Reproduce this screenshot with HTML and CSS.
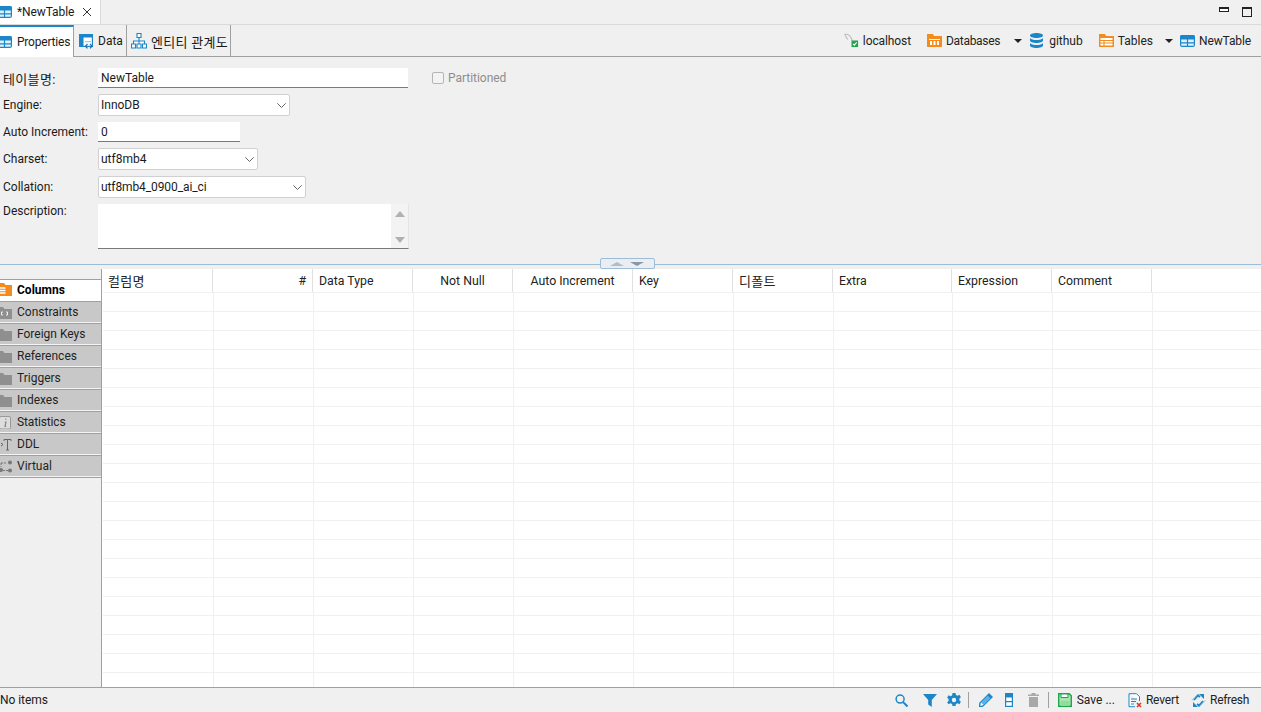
FILE: index.html
```html
<!DOCTYPE html>
<html lang="ko">
<head>
<meta charset="utf-8">
<title>NewTable</title>
<link rel="stylesheet" href="styles.css">
</head>
<body>
<svg class="defs" width="0" height="0" aria-hidden="true">
  <defs>
    <symbol id="tbl" viewBox="0 0 15 12" overflow="visible">
      <rect x=".6" y=".6" width="13.800" height="10.800" rx="1.500" fill="#dff0fa" stroke="#1b87c9" stroke-width="1.200"/>
      <path d="M0 2a2 2 0 0 1 2-2h11a2 2 0 0 1 2 2v2.500H0z" fill="#1b87c9"/>
      <path d="M0 7.800h15M7.500 4v8" stroke="#1b87c9" stroke-width="1.200" fill="none"/>
    </symbol>
    <symbol id="folder" viewBox="0 0 15 13">
      <path d="M0 1h6l1.500 2H15v10H0z" fill="#8f8f8f"/>
    </symbol>
  </defs>
</svg>
<div class="app">
  <header class="editor-tabs">
    <div class="editor-tab">
      <svg class="ico-tab" viewBox="3 0 12 12"><use href="#tbl" width="15" height="12"/></svg>
      <span class="editor-title">*NewTable</span>
      <svg class="close" viewBox="0 0 10 10"><path d="M1 1l8 8M9 1l-8 8" stroke="#333" stroke-width="1" fill="none"/></svg>
    </div>
    <div class="win-btns">
      <span class="win-min"></span>
      <span class="win-max"></span>
    </div>
  </header>

  <nav class="sub-bar">
    <div class="sub-tab active">
      <svg class="ico-tab" viewBox="3 0 12 12"><use href="#tbl" width="15" height="12"/></svg>
      <span class="props">Properties</span>
    </div>
    <div class="sub-tab data">
      <svg class="ico" viewBox="0 0 15 15">
        <rect x=".6" y=".6" width="12.800" height="11.800" fill="#fff" stroke="#1b87c9" stroke-width="1.200"/>
        <path d="M0 0h14v3.500H0zM0 3.500h4.500V13H0z" fill="#1b87c9"/>
        <path d="M6 7h6v1.200H6z" fill="#9ccbe8"/>
        <path d="M8.500 10l-2 2.200 2 2.200M11 10l2 2.200-2 2.200" fill="none" stroke="#1b6fa8" stroke-width="1.200"/>
      </svg>
      <span>Data</span>
    </div>
    <div class="sub-tab er">
      <svg class="ico-er" viewBox="0 0 16 16">
        <path d="M6 .5h4v4H6zM.5 11h4v4h-4zM6 11h4v4H6zM11.500 11h4v4h-4zM8 4.500V11M2.500 11V8h11v3" fill="#fff" stroke="#1b87c9" stroke-width="1.100"/>
      </svg>
      <span class="ko">엔티티 관계도</span>
    </div>
    <div class="crumbs">
      <span class="crumb c-host">
        <svg class="ico" viewBox="0 0 16 16">
          <path d="M1 1c4 0 7 3 8 8M1 1c0 3 2 4 3 6" fill="none" stroke="#b5bcc0" stroke-width="1.100"/>
          <rect x="8" y="8" width="7" height="7" fill="#1fa54a"/>
          <path d="M9.500 11.500l1.500 1.500 2.500-3" fill="none" stroke="#fff" stroke-width="1.100"/>
        </svg>
        <span class="lbl-host">localhost</span>
      </span>
      <span class="crumb c-db">
        <svg class="ico" viewBox="0 0 15 13">
          <path d="M0 0h6l1 2h8v11H0z" fill="#f28c1e"/>
          <path d="M2 5h11v1H2zM3 7h2v4H3zM6.500 7h2v4h-2zM10 7h2v4h-2z" fill="#fff"/>
        </svg>
        <span class="lbl-db">Databases</span>
      </span>
      <span class="drop c-drop1"></span>
      <span class="crumb c-gh">
        <svg class="ico narrow" viewBox="0 0 13 15">
          <path d="M0 2.500C0 1 3 0 6.500 0S13 1 13 2.500 10 5 6.500 5 0 4 0 2.500zM0 5c1 1.500 3.500 2 6.500 2S12 6.500 13 5v2.500C13 9 10 10 6.500 10S0 9 0 7.500zM0 10c1 1.500 3.500 2 6.500 2s5.500-.5 6.500-2v2.500C13 14 10 15 6.500 15S0 14 0 12.500z" fill="#1b87c9"/>
        </svg>
        github
      </span>
      <span class="crumb c-tb">
        <svg class="ico" viewBox="0 0 15 13">
          <path d="M0 0h6l1 2h8v11H0z" fill="#f28c1e"/>
          <path d="M1.500 4h12v2h-12zM1.500 7h3v1.500h-3zM5.500 7h8v1.500h-8zM1.500 9.500h3v2h-3zM5.500 9.500h8v2h-8z" fill="#fff"/>
        </svg>
        Tables
      </span>
      <span class="drop c-drop2"></span>
      <span class="crumb c-nt">
        <svg class="ico-nt" viewBox="0 0 15 12"><use href="#tbl" width="15" height="12"/></svg>
        <span class="lbl-nt">NewTable</span>
      </span>
    </div>
  </nav>

  <section class="form">
    <div class="row row-name">
      <label class="lbl ko">테이블명:</label>
      <div class="input input-name">NewTable</div>
      <div class="partition"><span class="checkbox"></span>Partitioned</div>
    </div>
    <div class="row row-combo">
      <label class="lbl">Engine:</label>
      <div class="combo combo-engine">InnoDB<svg class="chev" viewBox="0 0 9 5"><path d="M.3.300L4.500 4.500 8.700.300" fill="none" stroke="#666"/></svg></div>
    </div>
    <div class="row row-auto">
      <label class="lbl">Auto Increment:</label>
      <div class="input input-auto">0</div>
    </div>
    <div class="row row-combo">
      <label class="lbl">Charset:</label>
      <div class="combo combo-charset">utf8mb4<svg class="chev" viewBox="0 0 9 5"><path d="M.3.300L4.500 4.500 8.700.300" fill="none" stroke="#666"/></svg></div>
    </div>
    <div class="row row-combo">
      <label class="lbl">Collation:</label>
      <div class="combo combo-coll">utf8mb4_0900_ai_ci<svg class="chev" viewBox="0 0 9 5"><path d="M.3.300L4.500 4.500 8.700.300" fill="none" stroke="#666"/></svg></div>
    </div>
    <div class="row row-desc">
      <label class="lbl">Description:</label>
      <div class="textarea">
        <div class="scroll">
          <span class="arr-up"></span>
          <span class="arr-down"></span>
        </div>
      </div>
    </div>
  </section>

  <div class="splitter">
    <div class="split-btn"><span class="tri-up"></span><span class="tri-down"></span></div>
  </div>

  <main class="lower">
    <aside class="side">
      <div class="side-top"></div>
      <div class="side-tab on">
        <svg class="side-ico" viewBox="3 0 12 13"><path d="M0 0h7l1.500 2H15v11H0z" fill="#f28c1e"/><path d="M3 5h5.500M3 7.500h5.500M3 10h5.500" stroke="#fff" stroke-width="1.300"/></svg>
        <span>Columns</span>
      </div>
      <div class="side-tab">
        <svg class="side-ico" viewBox="3 0 12 13"><path d="M0 1h6l1.500 2H15v10H0z" fill="#8f8f8f"/><path d="M6 6H4.500v3H6M9 6h1.500v3H9" stroke="#eee" fill="none"/></svg>
        <span>Constraints</span>
      </div>
      <div class="side-tab">
        <svg class="side-ico" viewBox="3 0 12 13"><use href="#folder" width="15" height="13"/></svg>
        <span>Foreign Keys</span>
      </div>
      <div class="side-tab">
        <svg class="side-ico" viewBox="3 0 12 13"><use href="#folder" width="15" height="13"/></svg>
        <span>References</span>
      </div>
      <div class="side-tab">
        <svg class="side-ico" viewBox="3 0 12 13"><use href="#folder" width="15" height="13"/></svg>
        <span>Triggers</span>
      </div>
      <div class="side-tab">
        <svg class="side-ico" viewBox="3 0 12 13"><use href="#folder" width="15" height="13"/></svg>
        <span>Indexes</span>
      </div>
      <div class="side-tab">
        <svg class="side-ico" viewBox="2 0 12 13"><rect x="1.500" y=".5" width="11" height="12.500" rx="1.500" fill="#ddd" stroke="#999"/><path d="M7.800 2.500v1.200M6.800 6h1.200l-1 4.500h1.200" stroke="#888" stroke-width="1.200" fill="none"/></svg>
        <span class="lbl-stat">Statistics</span>
      </div>
      <div class="side-tab">
        <svg class="side-ico" viewBox="0 0 12 13"><path d="M4 1.500h7M7.500 1.500V12M6 12h3M4 1.500V3M11 1.500V3" stroke="#666" fill="none"/><path d="M1 5l2 1.500L1 8" stroke="#666" fill="none"/></svg>
        <span>DDL</span>
      </div>
      <div class="side-tab">
        <svg class="side-ico" viewBox="0 0 12 13"><circle cx="10" cy="2.500" r="2" fill="#777"/><circle cx="10" cy="10.500" r="2" fill="#777"/><circle cx="1" cy="10" r="2" fill="#777"/><path d="M1 3h6M1 3v4M3 10.500h5" stroke="#777" stroke-dasharray="2 1" fill="none"/></svg>
        <span>Virtual</span>
      </div>
      <div class="side-end"></div>
    </aside>
    <div class="table">
      <div class="thead">
        <div class="th w112"><span class="ko">컬럼명</span></div>
        <div class="th w100 right">#</div>
        <div class="th w100">Data Type</div>
        <div class="th w100 center">Not Null</div>
        <div class="th w120 center">Auto Increment</div>
        <div class="th w100">Key</div>
        <div class="th w100"><span class="ko">디폴트</span></div>
        <div class="th w119">Extra</div>
        <div class="th w100">Expression</div>
        <div class="th w100">Comment</div>
      </div>
      <div class="tbody">
        <div class="col w112"></div>
        <div class="col w100"></div>
        <div class="col w100"></div>
        <div class="col w100"></div>
        <div class="col w120"></div>
        <div class="col w100"></div>
        <div class="col w100"></div>
        <div class="col w119"></div>
        <div class="col w100"></div>
        <div class="col w100"></div>
        <div class="col fill"></div>
      </div>
    </div>
  </main>

  <footer class="status">
    <span class="status-text">No items</span>
    <div class="tools">
      <svg class="t t-search" viewBox="0 0 14 14"><circle cx="5.500" cy="5.500" r="4.300" fill="none" stroke="#1b87c9" stroke-width="1.600"/><path d="M8.500 8.500l5 5" stroke="#1b87c9" stroke-width="2.200"/></svg>
      <svg class="t t-filter" viewBox="0 0 14 14"><path d="M0 1h14L8.800 7v7l-3.600-2.500V7z" fill="#1b87c9"/></svg>
      <svg class="t t-gear" viewBox="0 0 14 14"><path fill="#1b87c9" fill-rule="evenodd" d="M5.500 0h3l.4 2 1.700.8 1.800-1 1.500 2.500-1.500 1.300v1.800l1.500 1.300-1.500 2.500-1.800-1-1.700.8-.4 2h-3l-.4-2-1.700-.8-1.800 1L.1 9.200l1.500-1.300V6.100L.1 4.800l1.500-2.500 1.800 1 1.700-.8zM7 4.800a2.200 2.200 0 1 0 0 4.400 2.200 2.200 0 0 0 0-4.400z"/></svg>
      <span class="vsep s1"></span>
      <svg class="t t-pencil" viewBox="0 0 14 14"><path d="M1 10L10 1l3 3-9 9-3.500 1z" fill="#fff" stroke="#1b87c9" stroke-width="1.400"/><path d="M2 9.500l7-7 2.500 2.500-7 7z" fill="#5fb0e0"/><path d="M8.500 2.500l3 3L13 4l-3-3z" fill="#1b87c9"/></svg>
      <svg class="t t-col" viewBox="0 0 8 14"><rect x=".6" y=".6" width="6.800" height="12.800" fill="#fff" stroke="#1b87c9" stroke-width="1.200"/><path d="M0 0h8v4.500H0zM0 8h8v1.200H0z" fill="#1b87c9"/></svg>
      <svg class="t t-trash" viewBox="0 0 11 14"><path d="M3.500 0h4v1.500H11V3H0V1.500h3.500zM1 4h9v10H1z" fill="#a8a8a8"/></svg>
      <span class="vsep s2"></span>
      <svg class="t t-save" viewBox="0 0 14 14"><path d="M.7.700h10.500l2.100 2.100v10.500H.7z" fill="#a8e6b0" stroke="#1fa54a" stroke-width="1.400"/><path d="M3 1h7v3.500H3z" fill="#fff" stroke="#1fa54a"/><path d="M2.500 8h9v5h-9z" fill="#8fdc9b"/></svg>
      <span class="tool-text x-save">Save ...</span>
      <svg class="t t-revert" viewBox="0 0 14 15"><path d="M1 .7h7.500l3 3V8M1 .7v13h6" fill="#fff" stroke="#1b87c9"/><path d="M3 6h6M3 8.500h5M3 11h3" stroke="#1b87c9"/><path d="M9 10l4 4M13 10l-4 4" stroke="#e0352b" stroke-width="1.600"/></svg>
      <span class="tool-text x-revert">Revert</span>
      <svg class="t t-refresh" viewBox="0 0 15 15"><path d="M3 7l4-4.500 2 1.500M12 8l-4 4.500-2-1.500" fill="none" stroke="#1b87c9" stroke-width="1.800"/><path d="M1 7.500L7 1l1.500 1.500M14 7.500L8 14l-1.500-1.500" fill="none" stroke="#6fb7e3" stroke-width="1"/><path d="M8 1h5v5zM7 14H2V9z" fill="#1b87c9"/></svg>
      <span class="tool-text x-refresh">Refresh</span>
    </div>
  </footer>
</div>
</body>
</html>
```
FILE: styles.css
```css
* { box-sizing: border-box; }
html, body { margin: 0; height: 100%; overflow: hidden; }
body {
  font-family: "Roboto", "Noto Sans CJK KR", sans-serif;
  font-size: 12px;
  color: #1a1a1a;
  background: #f0f0f0;
}
.defs { position: absolute; }
.app { display: flex; flex-direction: column; height: 712px; width: 1261px; overflow: hidden; }
svg { display: block; flex: none; }
.ko { font-size: 13px; letter-spacing: .35px; }
.sub-tab .ko { letter-spacing: .3px; }

/* editor tab strip */
.editor-tabs {
  height: 25px;
  display: flex;
  align-items: stretch;
  justify-content: space-between;
  border-bottom: 1px solid #d9d9d9;
}
.editor-tab {
  width: 101px;
  background: #fff;
  border-right: 1px solid #d9d9d9;
  display: flex;
  align-items: center;
}
.ico-tab { width: 12px; height: 12px; }
.editor-title { margin-left: 5px; letter-spacing: -.1px; }
.close { width: 10px; height: 10px; margin-left: 8px; }
.win-btns { display: flex; align-items: flex-start; gap: 13px; padding: 7px 9px 0 0; }
.win-min { width: 10px; height: 5px; border: 1px solid #222; border-top-width: 2px; background: #fff; }
.win-max { width: 10px; height: 10px; border: 1px solid #222; border-top-width: 2px; }

/* second row */
.sub-bar {
  height: 32px;
  display: flex;
  align-items: stretch;
  border-bottom: 1px solid #a0a0a0;
  position: relative;
}
.sub-tab {
  display: flex;
  align-items: center;
  border-right: 1px solid #a0a0a0;
  height: 31px;
  padding-top: 1px;
}
.sub-tab.active {
  width: 74px;
  background: #fff;
  border-top: 2px solid #1b87c9;
  height: 32px;
  padding-top: 0;
  padding-bottom: 1px;
  position: relative;
  z-index: 1;
}
.props { margin-left: 5px; letter-spacing: -.2px; }
.sub-tab.data { width: 53px; padding-left: 5px; gap: 4px; }
.sub-tab.er { width: 104px; padding-left: 4px; gap: 4px; }
.ico { width: 15px; height: 15px; }
.ico-er { width: 16px; height: 16px; }
.ico-nt { width: 15px; height: 12px; }
.narrow { width: 13px; }
.crumbs { margin-left: auto; display: flex; align-items: center; padding-right: 10px; }
.crumb { display: flex; align-items: center; gap: 4px; color: #222; }
.lbl-host { letter-spacing: -.1px; }
.lbl-db { letter-spacing: -.3px; }
.lbl-nt { letter-spacing: -.12px; }
.c-db { margin-left: 16px; }
.c-drop1 { margin-left: 14px; }
.c-gh { margin-left: 8px; gap: 6px; }
.c-tb { margin-left: 16px; }
.c-drop2 { margin-left: 12px; }
.c-nt { margin-left: 7px; }
.drop { width: 0; height: 0; border: 4px solid transparent; border-top: 4px solid #222; border-bottom: 0; }

/* form */
.form {
  height: 207px;
  display: flex;
  flex-direction: column;
  padding: 11px 0 0 3px;
}
.row { display: flex; align-items: center; }
.lbl { width: 95px; flex: none; }
.row-name { height: 20px; margin-bottom: 6px; }
.row-combo { height: 22px; margin-bottom: 6px; }
.row-auto { height: 20px; margin-bottom: 6px; }
.row-desc { height: 45px; align-items: flex-start; }
.input {
  height: 20px;
  background: #fff;
  border-bottom: 1px solid #7a7a7a;
  display: flex;
  align-items: center;
  padding-left: 3px;
}
.input-name { width: 310px; }
.input-auto { width: 142px; }
.partition { display: flex; align-items: center; margin-left: 24px; color: #8d8d8d; gap: 4px; letter-spacing: -.03px; }
.checkbox { width: 12px; height: 12px; border: 1px solid #b5b5b5; background: #f3f3f3; border-radius: 2px; }
.combo {
  height: 22px;
  background: #fff;
  border: 1px solid #d0d0d0;
  border-radius: 2px;
  display: flex;
  align-items: center;
  justify-content: space-between;
  padding: 0 3px 0 2px;
}
.combo-coll { letter-spacing: -.1px; }
.chev { width: 9px; height: 5px; }
.combo-engine { width: 192px; }
.combo-charset { width: 160px; }
.combo-coll { width: 208px; }
.textarea {
  width: 311px;
  height: 45px;
  background: #fff;
  border-bottom: 1px solid #7a7a7a;
  border-right: 1px solid #e4e4e4;
  display: flex;
  justify-content: flex-end;
}
.scroll {
  width: 17px;
  background: #f3f3f3;
  display: flex;
  flex-direction: column;
  justify-content: space-between;
  align-items: center;
  padding: 7px 0 5px;
}
.arr-up { width: 0; height: 0; border: 4px solid transparent; border-left-width: 5px; border-right-width: 5px; border-bottom: 6px solid #b0b0b0; border-top: 0; }
.arr-down { width: 0; height: 0; border: 4px solid transparent; border-left-width: 5px; border-right-width: 5px; border-top: 6px solid #b0b0b0; border-bottom: 0; }

/* splitter */
.splitter {
  height: 1px;
  background: #9dbcd8;
  position: relative;
}
.split-btn {
  position: absolute;
  left: 600px;
  top: -6px;
  width: 55px;
  height: 11px;
  background: #eaeef3;
  border: 1px solid #9dbcd8;
  border-radius: 2px;
  display: flex;
  align-items: center;
  justify-content: center;
  gap: 6px;
  padding-right: 2px;
}
.tri-up { width: 0; height: 0; border: 7px solid transparent; border-bottom: 4px solid #b3bcc6; border-top: 0; }
.tri-down { width: 0; height: 0; border: 7px solid transparent; border-top: 4px solid #8a97a6; border-bottom: 0; }

/* lower */
.lower { flex: 1; display: flex; padding-top: 4px; min-height: 0; }
.side {
  width: 102px;
  flex: none;
  border-right: 1px solid #a0a0a0;
  display: flex;
  flex-direction: column;
}
.side-top { height: 11px; border-bottom: 1px solid #a0a0a0; }
.side-tab {
  height: 22px;
  background: #c8c8c8;
  border-top: 1px solid #a0a0a0;
  border-bottom: 1px solid #f4f4f4;
  display: flex;
  align-items: center;
  color: #1f1f1f;
}
.side-tab span { margin-left: 5px; }
.side-ico { width: 12px; height: 13px; }
.side-tab .lbl-stat { letter-spacing: -.15px; }
.side-tab.on {
  height: 21px;
  background: #fff;
  border: 0;
  padding-bottom: 2px;
  font-weight: 700;
  color: #000;
}
.side-end { height: 1px; background: #a0a0a0; }
.table { flex: 1; display: flex; flex-direction: column; background: #fff; min-width: 0; }
.thead { display: flex; height: 23px; font-size: 12.3px; }
.th {
  height: 23px;
  border-right: 1px solid #e0e0e0;
  display: flex;
  align-items: center;
  padding: 0 6px;
  color: #222;
}
.th.right { justify-content: flex-end; }
.th.center { justify-content: center; }
.w112 { width: 111px; }
.w100 { width: 100px; }
.w120 { width: 120px; }
.w119 { width: 119px; }
.tbody { flex: 1; display: flex; padding-left: 1px; min-height: 0; }
.col {
  border-right: 1px solid #f0f0f0;
  background-image: linear-gradient(#f0f0f0 1px, transparent 1px);
  background-size: 100% 19px;
  background-position: 0 19px;
}
.col.fill { flex: 1; border-right: 0; }

/* status */
.status {
  height: 25px;
  border-top: 1px solid #a0a0a0;
  display: flex;
  align-items: center;
  justify-content: space-between;
}
.status-text { letter-spacing: -.05px; }
.tools { display: flex; align-items: center; padding-right: 12px; }
.t-search { width: 13px; height: 13px; }
.t-filter { width: 14px; height: 14px; margin-left: 15px; }
.t-gear { width: 14px; height: 14px; margin-left: 10px; }
.vsep { width: 1px; height: 16px; background: #a0a0a0; }
.s1 { margin-left: 7px; }
.t-pencil { width: 14px; height: 14px; margin-left: 10px; }
.t-col { width: 8px; height: 14px; margin-left: 12px; }
.t-trash { width: 11px; height: 14px; margin-left: 15px; }
.s2 { margin-left: 9px; }
.t-save { width: 14px; height: 14px; margin-left: 9px; }
.tool-text { color: #222; margin-left: 5px; }
.x-revert { margin-left: 4px; letter-spacing: -.15px; }
.x-refresh { margin-left: 4px; letter-spacing: -.3px; }
.t-revert { width: 14px; height: 15px; margin-left: 13px; }
.t-refresh { width: 15px; height: 15px; margin-left: 12px; }
```
